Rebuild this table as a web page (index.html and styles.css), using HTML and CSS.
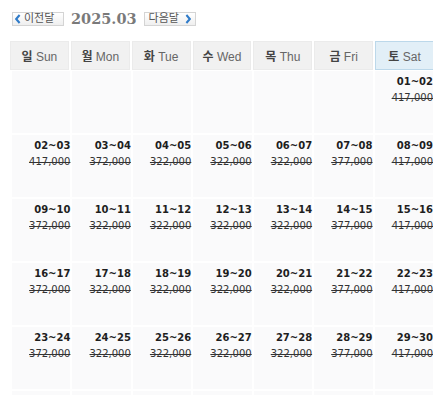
FILE: index.html
```html
<!DOCTYPE html>
<html lang="ko">
<head>
<meta charset="utf-8">
<link rel="stylesheet" href="styles.css">
</head>
<body>
<div class="nav">
  <button class="navbtn prev"><svg class="chev" width="6" height="10" viewBox="0 0 6 10"><polyline points="4.6,1 1.2,5 4.6,9" fill="none" stroke="#2f7bc9" stroke-width="2"/></svg>이전달</button>
  <span class="title">2025.03</span>
  <button class="navbtn next">다음달<svg class="chev" width="6" height="10" viewBox="0 0 6 10"><polyline points="1.4,1 4.8,5 1.4,9" fill="none" stroke="#2f7bc9" stroke-width="2"/></svg></button>
</div>
<table class="cal-head">
  <tr>
    <th><b>일</b> Sun</th>
    <th><b>월</b> Mon</th>
    <th><b>화</b> Tue</th>
    <th><b>수</b> Wed</th>
    <th><b>목</b> Thu</th>
    <th><b>금</b> Fri</th>
    <th class="sat"><b>토</b> Sat</th>
  </tr>
</table>
<table class="cal-body">
  <tr>
    <td></td><td></td><td></td><td></td><td></td><td></td>
    <td><div class="d">01~02</div><div class="p">417,000</div></td>
  </tr>
  <tr>
    <td><div class="d">02~03</div><div class="p">417,000</div></td>
    <td><div class="d">03~04</div><div class="p">372,000</div></td>
    <td><div class="d">04~05</div><div class="p">322,000</div></td>
    <td><div class="d">05~06</div><div class="p">322,000</div></td>
    <td><div class="d">06~07</div><div class="p">322,000</div></td>
    <td><div class="d">07~08</div><div class="p">377,000</div></td>
    <td><div class="d">08~09</div><div class="p">417,000</div></td>
  </tr>
  <tr>
    <td><div class="d">09~10</div><div class="p">372,000</div></td>
    <td><div class="d">10~11</div><div class="p">322,000</div></td>
    <td><div class="d">11~12</div><div class="p">322,000</div></td>
    <td><div class="d">12~13</div><div class="p">322,000</div></td>
    <td><div class="d">13~14</div><div class="p">322,000</div></td>
    <td><div class="d">14~15</div><div class="p">377,000</div></td>
    <td><div class="d">15~16</div><div class="p">417,000</div></td>
  </tr>
  <tr>
    <td><div class="d">16~17</div><div class="p">372,000</div></td>
    <td><div class="d">17~18</div><div class="p">322,000</div></td>
    <td><div class="d">18~19</div><div class="p">322,000</div></td>
    <td><div class="d">19~20</div><div class="p">322,000</div></td>
    <td><div class="d">20~21</div><div class="p">322,000</div></td>
    <td><div class="d">21~22</div><div class="p">377,000</div></td>
    <td><div class="d">22~23</div><div class="p">417,000</div></td>
  </tr>
  <tr>
    <td><div class="d">23~24</div><div class="p">372,000</div></td>
    <td><div class="d">24~25</div><div class="p">322,000</div></td>
    <td><div class="d">25~26</div><div class="p">322,000</div></td>
    <td><div class="d">26~27</div><div class="p">322,000</div></td>
    <td><div class="d">27~28</div><div class="p">322,000</div></td>
    <td><div class="d">28~29</div><div class="p">377,000</div></td>
    <td><div class="d">29~30</div><div class="p">417,000</div></td>
  </tr>
  <tr>
    <td></td><td></td><td></td><td></td><td></td><td></td><td></td>
  </tr>
</table>
</body>
</html>
```
FILE: styles.css
```css
html, body {
  margin: 0;
  padding: 0;
  background: #fff;
}
body {
  margin: 8px;
  font-family: "DejaVu Sans", Verdana, sans-serif;
}
.nav {
  display: flex;
  align-items: center;
  height: 21px;
  padding-left: 4px;
  gap: 7px;
}
.navbtn {
  display: inline-flex;
  align-items: center;
  height: 14px;
  width: 52px;
  margin: 0;
  border: 1px solid #d4d4d4;
  background: linear-gradient(#ffffff, #efefef);
  font-family: "DejaVu Sans", "Noto Sans CJK KR", sans-serif;
  font-size: 11px;
  color: #555;
  line-height: 12px;
}
.navbtn.prev {
  padding: 0 0 0 2px;
  gap: 3px;
}
.navbtn.next {
  padding: 0 0 0 4px;
  gap: 6px;
}
.chev {
  display: block;
  flex: none;
}
.title {
  font-family: "DejaVu Serif", serif;
  font-weight: bold;
  font-size: 14.5px;
  color: #7a7a7a;
  margin: 0 0 1px 0;
}
.cal-head {
  width: 428px;
  border-collapse: separate;
  border-spacing: 2px;
  table-layout: fixed;
  margin-top: 10px;
}
.cal-head th {
  height: 27px;
  padding: 0;
  background: #f1f1f1;
  border: 1px solid #ebebeb;
  font-family: "Liberation Sans", "Noto Sans CJK KR", sans-serif;
  font-weight: normal;
  font-size: 12px;
  color: #666;
}
.cal-head th b {
  font-family: "Noto Sans CJK KR", sans-serif;
  font-weight: bold;
  color: #444;
}
.cal-head th.sat {
  background: #e2eff7;
  border-color: #bcd8ea;
}
.cal-body {
  width: 425px;
  border-collapse: separate;
  border-spacing: 2px;
  table-layout: fixed;
  margin-top: -3px;
  margin-left: 2px;
}
.cal-body td {
  height: 58px;
  padding: 4px 0 0 0;
  vertical-align: top;
  text-align: right;
  background: #fafafb;
}
.d {
  font-family: "DejaVu Sans", Verdana, sans-serif;
  font-weight: bold;
  font-size: 10px;
  line-height: 14px;
  color: #1e1e1e;
}
.p {
  font-family: "DejaVu Sans", Verdana, sans-serif;
  font-size: 10px;
  line-height: 14px;
  margin-top: 2px;
  color: #333;
  text-decoration: line-through;
}
```
